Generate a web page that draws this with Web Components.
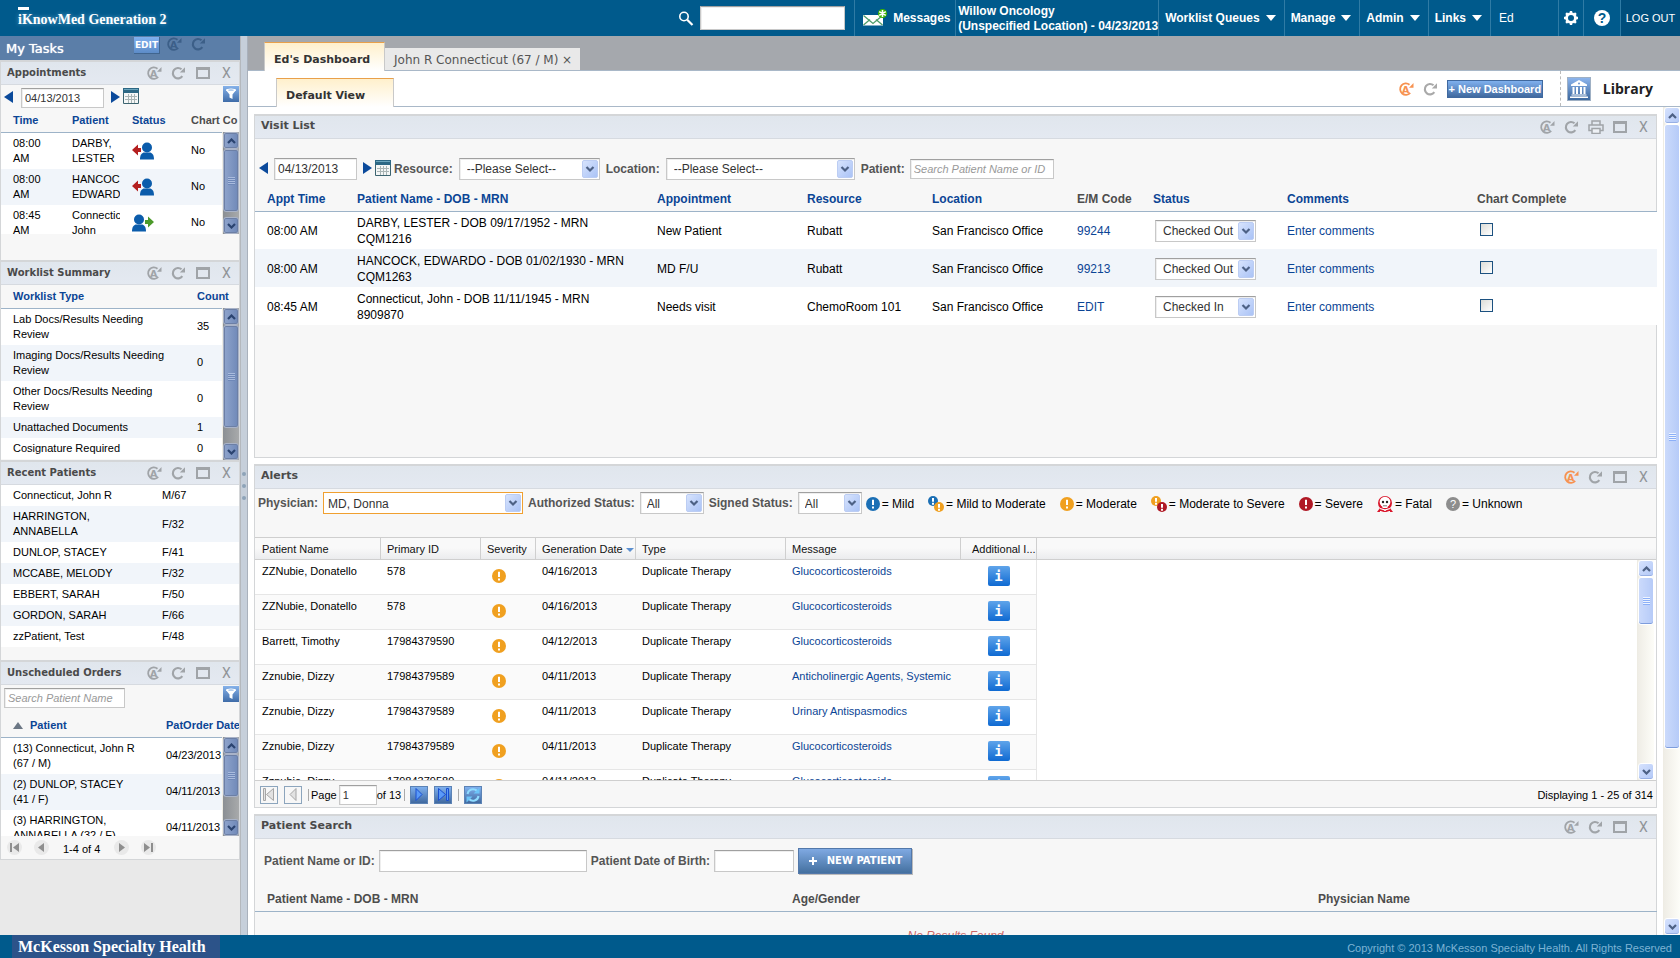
<!DOCTYPE html>
<html lang="en">
<head>
<meta charset="utf-8">
<title>iKnowMed Generation 2</title>
<style>
html, body { margin: 0; height: 100%; }
body { font: 12px/16px Arial, "Liberation Sans", sans-serif; color: #000; overflow: hidden; }
</style>
</head>
<body>
<km-app></km-app>
<script>
const VERDANA = 'Verdana, "DejaVu Sans", sans-serif';
const ARROW = "url(\"data:image/svg+xml,%3Csvg xmlns='http://www.w3.org/2000/svg' width='16' height='18'%3E%3ClinearGradient id='g' x2='1' y2='1'%3E%3Cstop stop-color='%23d8e4fd'/%3E%3Cstop offset='1' stop-color='%23a9c2f6'/%3E%3C/linearGradient%3E%3Crect x='.5' y='.5' width='15' height='17' rx='1.5' fill='url(%23g)' stroke='%23bccdf3'/%3E%3Cpath d='M4.5 7l3.5 3.5L11.500 7' fill='none' stroke='%234d6185' stroke-width='2.2'/%3E%3C/svg%3E\")";

const BASE = `
*, *::before, *::after { box-sizing: border-box; }
button { font: inherit; color: inherit; border: 0; padding: 0; margin: 0; background: none; cursor: pointer; }
a { color: #0b4595; text-decoration: none; }
label { font-weight: bold; color: #555; white-space: nowrap; }
input:not([type]), select { font: inherit; font-size: 12px; color: #333; height: 22px; margin: 0; background: #fff; border: 1px solid #c8c8c8; border-top-color: #a0a0a0; box-shadow: inset 1px 1px 0 #eee; border-radius: 0; outline: 0; }
input:not([type]) { padding: 0 3px; }
input::placeholder { color: #999; font-style: italic; opacity: 1; }
select { appearance: none; padding: 0 18px 0 7px; background: #fff ${ARROW} no-repeat right 1px center; }
table { border-collapse: collapse; table-layout: fixed; width: 100%; }
th { text-align: left; color: #4d4d4d; }
th, td { padding: 0 0 0 12px; overflow: hidden; }
th.sort { color: #0b4595; }
svg { display: block; }
`;

const ICONS = {
  refresh: [15, 14, '<path d="M11.300 10.200A5.200 5.200 0 1 1 10.500 3.300" fill="none" stroke="currentColor" stroke-width="2.200"/><path d="M14 1.200v5.300H8.800z" fill="currentColor"/>'],
  auto: [15, 14, '<path d="M11.200 10.800A5.700 5.700 0 1 1 10.500 2.700" fill="none" stroke="currentColor" stroke-width="1.800"/><path d="M14.500 1v4.800H10z" fill="currentColor"/><text x="6.800" y="10.800" text-anchor="middle" font-family="DejaVu Sans, sans-serif" font-size="9.500" font-weight="bold" fill="currentColor">A</text>'],
  max: [14, 12, '<path d="M1 1v10h12V1z" fill="none" stroke="currentColor" stroke-width="2"/><path d="M0 0h14v3H0z" fill="currentColor"/>'],
  print: [16, 14, '<path d="M4 5V1h8v4M4 10.500H1V5h14v5.500h-3" fill="none" stroke="currentColor" stroke-width="1.500"/><path d="M4 8.500h8v5H4z" fill="#eef1f5" stroke="currentColor" stroke-width="1.500"/>'],
  left: [9, 12, '<path d="M9 0v12L0 6z" fill="#0b4a9b"/>'],
  right: [9, 12, '<path d="M0 0v12l9-6z" fill="#0b4a9b"/>'],
  cal: [16, 16, '<path d="M.5.5h15v15H.5z" fill="#f4f6f6" stroke="#3c6470"/><path d="M0 0h16v5H0z" fill="#2c6784"/><path d="M1 1h14v1H1z" fill="#6ba5bd"/><path d="M2 8.500h12M2 11.500h12M5.500 6v9M8.500 6v9M11.500 6v9" stroke="#a9b4b4"/>'],
  filter: [16, 16, '<defs><linearGradient id="f" x2="0" y2="1"><stop stop-color="#86b2ea"/><stop offset="1" stop-color="#3f6ca8"/></linearGradient></defs><path d="M0 0h16v16H0z" fill="url(#f)"/><path d="M3 4h10L9.500 8.500V13l-3-1.500v-3z" fill="#fff"/><ellipse cx="8" cy="4" rx="5" ry="1.500" fill="#fff"/><ellipse cx="8" cy="4" rx="3" ry=".6" fill="#6f9fdb"/>'],
  search: [16, 15, '<circle cx="6" cy="5.500" r="4.200" fill="none" stroke="#fff" stroke-width="1.600"/><path d="M9.200 8.800L14.500 14" stroke="#fff" stroke-width="2.200"/>'],
  mail: [26, 18, '<path d="M1 6h20v10.500H1z" fill="#fff"/><path d="M1.500 6.500l9.500 8 9.500-8M1.500 16l6.500-5.500M20.500 16l-6.500-5.500" fill="none" stroke="#4d9c6a" stroke-width="1.300"/><circle cx="20.500" cy="4.500" r="4.500" fill="#3cb400"/><path d="M20.500 1v7M17.200 2.600l6.600 3.800M23.800 2.600l-6.600 3.800" stroke="#fff" stroke-width="1.600"/>'],
  caret: [10, 6, '<path d="M0 0h10L5 6z" fill="#fff"/>'],
  gear: [14, 14, '<circle cx="7" cy="7" r="4.400" fill="none" stroke="#fff" stroke-width="2.800"/><g stroke="#fff" stroke-width="2.400"><path d="M7 0v2.500M7 11.500V14M0 7h2.500M11.500 7H14M2.100 2.100l1.700 1.700M10.200 10.200l1.700 1.700M11.900 2.100l-1.700 1.700M3.800 10.200l-1.700 1.700"/></g>'],
  help: [16, 16, '<circle cx="8" cy="8" r="8" fill="#fff"/><text x="8" y="13" text-anchor="middle" font-family="Liberation Sans, Arial" font-size="14" font-weight="bold" fill="#005a8c">?</text>'],
  library: [24, 24, '<defs><linearGradient id="l" x2="0" y2="1"><stop stop-color="#8cb4ec"/><stop offset="1" stop-color="#3d699f"/></linearGradient></defs><path d="M0 0h24v24H0z" fill="#9fb0c4"/><path d="M1 1h22v22H1z" fill="url(#l)"/><path d="M12 3l8 4.500V9H4V7.500zM5.500 10h2v7h-2zM9 10h2v7H9zM13 10h2v7h-2zM16.500 10h2v7h-2zM4.500 17.500h15v1h-15zM3 19.500h18v1.500H3z" fill="#fff"/><circle cx="12" cy="6.500" r="1" fill="#6f97cf"/>'],
  out: [22, 18, '<path d="M0 8l6-5.500V6h3v4H6v3.500z" fill="#b41f1f"/><circle cx="15" cy="5.500" r="5" fill="#0b5cab"/><path d="M8 17.500c0-5 2-7 4.500-7h5c2.500 0 4.500 2 4.500 7z" fill="#0b5cab"/>'],
  in: [22, 18, '<path d="M22 8l-6-5.500V6h-3v4h3v3.500z" fill="#4c9a2a"/><circle cx="7" cy="5.500" r="5" fill="#0b5cab"/><path d="M0 17.500c0-5 2-7 4.500-7h5c2.500 0 4.500 2 4.500 7z" fill="#0b5cab"/>'],
  fatal: [16, 16, '<circle cx="8" cy="7" r="7" fill="#d9152a"/><path d="M0 16l3-4 5 2 5-2 3 4z" fill="#d9152a"/><ellipse cx="8" cy="6" rx="5.400" ry="5.200" fill="#fff"/><path d="M5.500 9h5v3h-5z" fill="#fff"/><circle cx="6" cy="6" r="1.200" fill="#222"/><circle cx="10" cy="6" r="1.200" fill="#222"/><path d="M6 9.800h4" stroke="#555" stroke-width=".8"/><path d="M3 12.500l10 3M13 12.500l-10 3" stroke="#fff" stroke-width="1.300"/>'],
  sync: [16, 16, '<path d="M2.500 7a5.500 5.500 0 0 1 9.500-3M13.500 9a5.500 5.500 0 0 1-9.500 3" fill="none" stroke="#8fdcff" stroke-width="2"/><path d="M14.500 .5v6H8.500zM1.500 15.500v-6h6z" fill="#6cc4f8"/>'],
  desc: [8, 4, '<path d="M0 0h8L4 4z" fill="#5b8fd0"/>'],
  asc: [10, 7, '<path d="M0 7h10L5 0z" fill="#6c7785"/>'],
  plus: [10, 10, '<path d="M5 1v8M1 5h8" stroke="#fff" stroke-width="2"/>'],
  first: [9, 9, '<path d="M0 0h2v9H0zM9 0v9L3 4.500z" fill="currentColor"/>'],
  prev: [9, 9, '<path d="M7 0v9L1 4.500z" fill="currentColor"/>'],
  next: [9, 9, '<path d="M2 0v9l6-4.500z" fill="currentColor"/>'],
  last: [9, 9, '<path d="M7 0h2v9H7zM0 0v9l6-4.500z" fill="currentColor"/>'],
  bigfirst: [12, 13, '<path d="M.5.5h2v12h-2zM10.500.5v12l-7-6z" fill="#e2e2e2" stroke="#a6a6a6"/>'],
  bigprev: [12, 13, '<path d="M9 .5v12L3 6.500z" fill="#e2e2e2" stroke="#a6a6a6"/>'],
  bignext: [12, 13, '<path d="M3 .5v12l6-6z" fill="#5a9af8" stroke="#1a4fd0"/>'],
  biglast: [12, 13, '<path d="M9.500.5h2v12h-2zM1.500.5v12l7-6z" fill="#5a9af8" stroke="#1a4fd0"/>'],
  up: [9, 6, '<path d="M1 5l3.500-3.500L8 5" fill="none" stroke="currentColor" stroke-width="2.200"/>'],
  down: [9, 6, '<path d="M1 1l3.500 3.500L8 1" fill="none" stroke="currentColor" stroke-width="2.200"/>']
};
const bang = (cx, cy, r, fill) => `<circle cx="${cx}" cy="${cy}" r="${r}" fill="${fill}"/><path d="M${cx - 1} ${cy - r * .62}h2v${r * .75}h-2zM${cx - 1} ${cy + r * .35}h2v2h-2z" fill="#fff"/>`;
ICONS.mild = [14, 14, bang(7, 7, 7, '#1b6fb5')];
ICONS.moderate = [14, 14, bang(7, 7, 7, '#f0a020')];
ICONS.severe = [14, 14, bang(7, 7, 7, '#b01824')];
ICONS.mildmod = [16, 16, bang(5, 5, 5, '#1b6fb5') + bang(11, 11, 5, '#f0a020')];
ICONS.modsev = [16, 16, bang(5, 5, 5, '#f0a020') + bang(11, 11, 5, '#b01824')];
ICONS.unknown = [14, 14, '<circle cx="7" cy="7" r="7" fill="#8d8d8d"/><text x="7" y="11" text-anchor="middle" font-family="Liberation Sans, Arial" font-size="11" fill="#fff">?</text>'];

function define(name, css, html) {
  customElements.define(name, class extends HTMLElement {
    connectedCallback() {
      if (this.shadowRoot) return;
      const root = this.attachShadow({ mode: 'open' });
      root.innerHTML = `<style>${BASE}${css}</style>${typeof html === 'function' ? html(this) : html}`;
    }
  });
}
const icon = n => `<km-icon name="${n}"></km-icon>`;

define('km-icon', ':host { display: inline-block; flex: none; vertical-align: middle; }', el => {
  const [w, h, body] = ICONS[el.getAttribute('name')];
  return `<svg width="${w}" height="${h}" viewBox="0 0 ${w} ${h}" aria-hidden="true">${body}</svg>`;
});

/* Scrollbar; --size and --rest share the track between the thumb and the space under it. */
define('km-scrollbar', `
:host { display: flex; flex-direction: column; width: 17px; flex: none; background: linear-gradient(90deg, #efede6, #fdfdf8); border-left: 1px solid #eeece4; color: #4d6185; }
:host([dim]) { background: linear-gradient(90deg, #8b8f94, #a8aaab); color: #2b4470; }
button { height: 17px; flex: none; display: grid; place-items: center; border: 1px solid #fff; border-radius: 3px; background: linear-gradient(135deg, #d6e2fd, #b2c8f7); box-shadow: inset 0 -1px 0 #98b0e4; }
:host([dim]) button, :host([dim]) .thumb { background: linear-gradient(90deg, #8fa4cc, #7089b8); border-color: #a9b3c8; box-shadow: inset 0 0 0 1px #6c7fa5; }
.thumb { flex: var(--size) 1 0; border: 1px solid #fff; border-radius: 3px; background: linear-gradient(90deg, #cbdafb, #b6cbf8); box-shadow: inset 0 -1px 0 #7e9ddc; display: grid; place-items: center; }
.thumb i { width: 7px; height: 8px; background: repeating-linear-gradient(#eef4fe 0 1px, #8cb0f8 1px 2px); }
:host([dim]) .thumb i { background: repeating-linear-gradient(#a9bbdd 0 1px, #6f88b8 1px 2px); }
.rest { flex: var(--rest) 1 0; }`,
`<button aria-label="Scroll up">${icon('up')}</button><div class="thumb"><i></i></div><div class="rest"></div><button aria-label="Scroll down">${icon('down')}</button>`);

define('km-panel', `
:host { display: flex; flex-direction: column; border: 1px solid #d4d6d8; border-top-width: 2px; background: #f7f7f7; }
header { flex: none; height: 23px; display: flex; align-items: center; justify-content: space-between; background: linear-gradient(#e0e6ed, #e4e9f1); border-bottom: 1px solid #d6dae0; padding: 0 5px 0 6px; }
h2 { margin: 0; padding-bottom: 3px; font: bold 11px/16px ${VERDANA}; color: #4a4a4a; }
:host([compact]) h2 { font-size: 10px; padding-bottom: 0; }
:host([compact]) { border-bottom: 0; }
.tools { display: flex; align-items: center; gap: 9px; color: #a0a4a8; }
.tools button { display: grid; place-items: center; width: 15px; }
.tools .hot { color: #f79250; }
.tools .close { font: 14px/16px Roboto, sans-serif; color: #909498; }
.body { flex: 1; min-height: 0; display: flex; flex-direction: column; }`,
el => `<header><h2>${el.getAttribute('heading')}</h2><div class="tools">
<button class="${el.hasAttribute('hot') ? 'hot' : ''}" aria-label="Auto refresh">${icon('auto')}</button>
<button aria-label="Refresh">${icon('refresh')}</button>
${el.hasAttribute('print') ? `<button aria-label="Print">${icon('print')}</button>` : ''}
<button aria-label="Maximize">${icon('max')}</button><button class="close" aria-label="Close">X</button></div></header>
<div class="body"><slot></slot></div>`);

define('km-header', `
:host { display: flex; align-items: stretch; height: 36px; flex: none; background: #005a8c; color: #fff; font-weight: bold; }
.brand { margin-left: 18px; padding-top: 7px; flex: 1; }
.brand i { display: block; width: 11px; height: 3px; background: #fff; }
.brand span { font: bold 14px/20px "Liberation Serif", serif; text-shadow: 0 0 4px #5fa4cc; }
.find { display: flex; align-items: center; gap: 6px; padding-right: 9px; }
.find input { width: 145px; height: 24px; }
nav { display: flex; }
nav > * { display: flex; align-items: center; border-left: 1px solid #2f7ba5; white-space: nowrap; }
.menu { padding: 0 8px 0 6px; gap: 6px; }
.mail { padding: 0 4px 0 7px; gap: 5px; width: 101px; }
.place { padding: 2px 3px 0 2px; line-height: 15px; width: 203px; }
.user { width: 68px; padding-left: 8px; font-weight: normal; }
.ic { width: 25px; justify-content: center; }
.help { width: 37px; }
.out { width: 60px; justify-content: center; background: #004e7c; font-weight: normal; font-size: 11px; }`,
`<div class="brand"><i></i><span>iKnowMed Generation 2</span></div>
<div class="find">${icon('search')}<input aria-label="Search"></div>
<nav><button class="mail">${icon('mail')}Messages</button>
<div class="place">Willow Oncology<br>(Unspecified Location) - 04/23/2013</div>
${['Worklist Queues', 'Manage', 'Admin', 'Links'].map(t => `<button class="menu">${t}${icon('caret')}</button>`).join('')}
<div class="user">Ed</div><button class="ic" aria-label="Settings">${icon('gear')}</button><button class="ic help" aria-label="Help">${icon('help')}</button><button class="out">LOG OUT</button></nav>`);

define('km-footer', `
:host { display: flex; align-items: stretch; justify-content: space-between; height: 23px; flex: none; background: #005a8c; }
.logo { margin-left: 12px; width: 208px; padding-left: 6px; background: #2c5389; color: #fff; font: bold 16px/24px "Liberation Serif", serif; white-space: nowrap; }
small { font-size: 11px; line-height: 26px; color: #7db3d4; margin-right: 8px; }`,
`<div class="logo">McKesson Specialty Health</div><small>Copyright © 2013 McKesson Specialty Health. All Rights Reserved</small>`);

const LIST_CSS = `
:host { display: flex; flex-direction: column; flex: 1; min-height: 0; font-size: 11px; line-height: 15px; }
.bar { display: flex; align-items: flex-start; flex: none; }
.bar input { font-size: 11px; height: 20px; }
.bar button { display: grid; }
.list { position: relative; overflow: hidden; flex: 1; min-height: 0; }
th { height: 23px; border-bottom: 1px solid #9db3c8; white-space: nowrap; font-size: 11px; }
td { padding-top: 3px; padding-bottom: 3px; vertical-align: middle; }
tbody tr { background: #fff; } tbody tr:nth-child(even) { background: #f1f5fa; }
km-scrollbar { position: absolute; right: 0; top: 23px; bottom: 0; }
`;
define('km-appointments', LIST_CSS + `
.bar { padding: 3px 0 0 3px; height: 24px; }
.bar button { margin-top: 3px; } .bar input { width: 83px; margin: 0 7px 0 8px; }
.bar .cal { margin: 0 auto 0 3px; } .bar .filter { margin: -2px 0 0; }
.list { margin-bottom: 26px; }`,
`<div class="bar"><button aria-label="Previous day">${icon('left')}</button><input value="04/13/2013" aria-label="Date"><button aria-label="Next day">${icon('right')}</button><button class="cal" aria-label="Calendar">${icon('cal')}</button><button class="filter" aria-label="Filter">${icon('filter')}</button></div>
<div class="list"><table><colgroup><col style="width:59px"><col style="width:60px"><col style="width:59px"><col></colgroup>
<thead><tr><th class="sort">Time</th><th class="sort">Patient</th><th class="sort">Status</th><th>Chart Co</th></tr></thead><tbody>
${[['08:00 AM', 'DARBY, LESTER', 'out'], ['08:00 AM', 'HANCOCK, EDWARDO', 'out'], ['08:45 AM', 'Connecticut, John', 'in']].map(r => `<tr><td>${r[0].replace(' ', '<br>')}</td><td>${r[1]}</td><td>${icon(r[2])}</td><td>No</td></tr>`).join('')}
</tbody></table><km-scrollbar dim style="--size:62;--rest:5"></km-scrollbar></div>`);

define('km-worklist', LIST_CSS,
`<div class="list"><table><colgroup><col style="width:184px"><col></colgroup><thead><tr><th class="sort">Worklist Type</th><th class="sort">Count</th></tr></thead><tbody>
${[['Lab Docs/Results Needing Review', 35], ['Imaging Docs/Results Needing Review', 0], ['Other Docs/Results Needing Review', 0], ['Unattached Documents', 1], ['Cosignature Required', 0]].map(r => `<tr><td>${r[0].replace(' Review', '<br>Review')}</td><td>${r[1]}</td></tr>`).join('')}
</tbody></table><km-scrollbar dim style="--size:102;--rest:15"></km-scrollbar></div>`);

define('km-recent', LIST_CSS,
`<div class="list"><table><colgroup><col style="width:149px"><col></colgroup><tbody>
${[['Connecticut, John R', 'M/67'], ['HARRINGTON,<br>ANNABELLA', 'F/32'], ['DUNLOP, STACEY', 'F/41'], ['MCCABE, MELODY', 'F/32'], ['EBBERT, SARAH', 'F/50'], ['GORDON, SARAH', 'F/66'], ['zzPatient, Test', 'F/48']].map(r => `<tr><td>${r[0]}</td><td>${r[1]}</td></tr>`).join('')}
</tbody></table></div>`);

define('km-orders', LIST_CSS + `
.bar { padding: 3px 0 0 3px; height: 29px; justify-content: space-between; } .bar input { width: 121px; } .bar button { margin-top: -2px; }
th km-icon { margin-right: 7px; }
.pager { height: 24px; flex: none; display: flex; align-items: center; gap: 12px; padding-left: 6px; color: #8e8e8e; border-bottom: 1px solid #d4d6d8; }
.pager button { width: 15px; height: 15px; border-radius: 50%; background: #e9e9e9; display: grid; place-items: center; }
.pager span { color: #000; margin: 3px 2px 0; }`,
`<div class="bar"><input placeholder="Search Patient Name" aria-label="Search Patient Name"><button aria-label="Filter">${icon('filter')}</button></div>
<div class="list"><table><colgroup><col style="width:153px"><col></colgroup><thead><tr><th class="sort">${icon('asc')}Patient</th><th class="sort">PatOrder Date</th></tr></thead><tbody>
${[['(13) Connecticut, John R<br>(67 / M)', '04/23/2013'], ['(2) DUNLOP, STACEY<br>(41 / F)', '04/11/2013'], ['(3) HARRINGTON,<br>ANNABELLA (32 / F)', '04/11/2013']].map(r => `<tr><td>${r[0]}</td><td>${r[1]}</td></tr>`).join('')}
</tbody></table><km-scrollbar dim style="--size:42;--rest:22"></km-scrollbar></div>
<div class="pager"><button aria-label="First">${icon('first')}</button><button aria-label="Previous">${icon('prev')}</button><span>1-4 of 4</span><button aria-label="Next">${icon('next')}</button><button aria-label="Last">${icon('last')}</button></div>`);

define('km-sidebar', `
:host { display: block; width: 240px; flex: none; background: #e9e9e9; overflow: hidden; }
.top { height: 24px; background: #5b7ea8; color: #fff; display: flex; align-items: flex-start; padding-left: 6px; }
h1 { font: 13px/26px ${VERDANA}; margin: 0; width: 128px; text-shadow: 0 0 1px #fff; }
.top button { display: grid; place-items: center; margin: 1px 9px 0 0; color: #3c5f88; }
.top .edit { font: bold 9px/15px ${VERDANA}; width: 26px; height: 17px; margin: 1px 7px 0 0; color: #fff; background: linear-gradient(#7fb0ee, #5d8cc8); border-right: 1px solid #40658f; border-bottom: 1px solid #40658f; }
km-panel { height: 200px; }`,
`<div class="top"><h1>My Tasks</h1><button class="edit">EDIT</button><button aria-label="Auto refresh">${icon('auto')}</button><button aria-label="Refresh">${icon('refresh')}</button></div>
<km-panel compact heading="Appointments"><km-appointments></km-appointments></km-panel>
<km-panel compact heading="Worklist Summary"><km-worklist></km-worklist></km-panel>
<km-panel compact heading="Recent Patients"><km-recent></km-recent></km-panel>
<km-panel compact heading="Unscheduled Orders"><km-orders></km-orders></km-panel>`);

define('km-splitter', `
:host { display: flex; flex-direction: column; align-items: center; justify-content: center; gap: 8px; width: 8px; flex: none; background: #c6cfda; border-left: 1px solid #b4b8bd; border-right: 1px solid #a9b1bc; }
i { width: 4px; height: 4px; border-radius: 50%; background: #8ea3b8; }`, '<i></i><i></i><i></i>');

define('km-tabs', `
:host { display: block; flex: none; font: 11px/16px ${VERDANA}; color: #333; }
.row { display: flex; border-bottom: 1px solid #a9b8c8; }
.main { height: 35px; background: #a5a8ad; align-items: flex-end; padding-left: 16px; }
.sub { height: 36px; background: #fff; padding-left: 28px; align-items: center; padding-right: 27px; }
.on { font-weight: bold; text-align: left; background: linear-gradient(#fff0cc, #fff); border: 1px solid #c9c9c9; border-top: 1px solid #e9a04a; border-bottom: 0; margin-bottom: -1px; height: 29px; }
.main .on { width: 121px; padding: 6px 0 0 9px; }
.sub .on { width: 118px; align-self: flex-end; padding: 6px 0 0 9px; margin-right: auto; }
.off { height: 22px; width: 195px; background: #e9e9e9; display: flex; align-items: center; justify-content: space-between; padding: 2px 8px 0 9px; color: #555; font-size: 12px; }
.tool { color: #a9a9a9; margin-right: 9px; } .hot { color: #f79250; }
.new { font: bold 11px/16px "Liberation Sans", sans-serif; color: #fff; height: 18px; width: 96px; margin-right: 17px; background: linear-gradient(#7fb0ee, #40699f); border: 1px solid #40699f; white-space: nowrap; }
.lib { align-self: stretch; border-left: 1px dashed #bbb; padding-left: 6px; display: flex; align-items: center; gap: 12px; font: bold 14px/18px "Open Sans", sans-serif; color: #222; }`,
`<div class="row main" role="tablist"><button class="on" role="tab">Ed's Dashboard</button><button class="off" role="tab"><span>John R Connecticut (67 / M)</span><span>×</span></button></div>
<div class="row sub"><button class="on">Default View</button><button class="tool hot" aria-label="Auto refresh">${icon('auto')}</button><button class="tool" aria-label="Refresh">${icon('refresh')}</button><button class="new">+ New Dashboard</button><a class="lib" href="#library">${icon('library')}Library</a></div>`);

define('km-visits', `
:host { display: block; }
.bar { display: flex; align-items: center; gap: 6px; padding: 19px 0 9px 4px; }
.bar > * { flex: none; }
.bar button { display: grid; padding-bottom: 2px; }
.bar input { width: 83px; } .bar #pt { width: 144px; height: 20px; margin-left: -1px; font-size: 11px; }
.bar .cal { margin: 0 -3px; }
#res { width: 141px; } #loc { width: 189px; }
th { height: 22px; padding-bottom: 2px; border-bottom: 1px solid #9db3c8; }
td { height: 38px; padding-top: 1px; }
tbody tr { background: #fff; } tbody tr:nth-child(even) { background: #f1f5fa; }
td select { width: 101px; margin-left: 2px; display: block; }
input[type=checkbox] { appearance: none; display: block; width: 13px; height: 13px; margin: 0 0 2px 3px; border: 1px solid #1c5180; background: linear-gradient(135deg, #dcdcd7, #fff); }`,
`<div class="bar"><button aria-label="Previous day">${icon('left')}</button><input value="04/13/2013" aria-label="Visit date"><button aria-label="Next day">${icon('right')}</button><button class="cal" aria-label="Calendar">${icon('cal')}</button>
<label for="res">Resource:</label><select id="res"><option>--Please Select--</option></select><label for="loc">Location:</label><select id="loc"><option>--Please Select--</option></select><label for="pt">Patient:</label><input id="pt" placeholder="Search Patient Name or ID"></div>
<table><colgroup>${[90, 300, 150, 125, 145, 76, 134, 190, 192].map(w => `<col style="width:${w}px">`).join('')}</colgroup>
<thead><tr>${['Appt Time', 'Patient Name - DOB - MRN', 'Appointment', 'Resource', 'Location', 'E/M Code', 'Status', 'Comments', 'Chart Complete'].map(t => `<th class="${/E\/M|Chart/.test(t) ? '' : 'sort'}">${t}</th>`).join('')}</tr></thead><tbody>
${[['08:00 AM', 'DARBY, LESTER - DOB 09/17/1952 - MRN<br>CQM1216', 'New Patient', 'Rubatt', '99244', 'Checked Out'],
   ['08:00 AM', 'HANCOCK, EDWARDO - DOB 01/02/1930 - MRN<br>CQM1263', 'MD F/U', 'Rubatt', '99213', 'Checked Out'],
   ['08:45 AM', 'Connecticut, John - DOB 11/11/1945 - MRN<br>8909870', 'Needs visit', 'ChemoRoom 101', 'EDIT', 'Checked In']].map(r =>
`<tr><td>${r[0]}</td><td>${r[1]}</td><td>${r[2]}</td><td>${r[3]}</td><td>San Francisco Office</td><td><a href="#code">${r[4]}</a></td><td><select aria-label="Status"><option>${r[5]}</option></select></td><td><a href="#comments">Enter comments</a></td><td><input type="checkbox" aria-label="Chart complete"></td></tr>`).join('')}
</tbody></table>`);

define('km-alerts', `
:host { display: flex; flex-direction: column; flex: 1; min-height: 0; }
.bar { display: flex; align-items: flex-start; gap: 5px; padding: 3px 3px 0; height: 48px; flex: none; line-height: 22px; }
.bar > * { flex: none; }
#phy { width: 200px; padding-left: 4px; border-color: #f0a030; box-shadow: none; } #auth, #sign { width: 64px; padding-left: 6px; }
.key { display: flex; white-space: nowrap; height: 24px; margin-left: -1px; }
.key span { display: flex; align-items: center; gap: 2px; margin-right: 14px; }
.grid { position: relative; flex: 1; min-height: 0; overflow: hidden; border-top: 1px solid #cfcfcf; font-size: 11px; line-height: 14px;
  background: linear-gradient(#cfcfcf, #cfcfcf) 0 21px / 100% 1px no-repeat, linear-gradient(#f9f9f9 0 45%, #eaebed) 0 0 / 100% 22px no-repeat, #fff; }
table { width: 782px; border-collapse: separate; border-spacing: 0; }
th { height: 22px; font-weight: normal; color: #111; border-right: 1px solid #cfcfcf; white-space: nowrap; vertical-align: middle; text-overflow: ellipsis; }
th, td { padding-left: 6px; } th:first-child, td:first-child { padding-left: 7px; } th:last-child { padding-left: 11px; }
td { height: 35px; vertical-align: top; padding-top: 4px; border-bottom: 1px solid #e6e6e6; }
td.sev { padding: 9px 0 0 11px; }
td:last-child { padding: 6px 0 0; text-align: center; border-right: 1px solid #e6e6e6; }
td.sev km-icon, .info { display: block; }
tbody tr:nth-child(even) { background: #fafafa; }
.info { width: 22px; height: 20px; margin: 0 auto; border-radius: 2px; color: #fff; font: bold 14px/20px "DejaVu Sans Mono", monospace; background: linear-gradient(#5fa4ea, #0f6ad2); }
km-scrollbar { position: absolute; top: 22px; right: 2px; bottom: 0; }
.pager { height: 27px; flex: none; display: flex; align-items: center; border-top: 1px solid #cfcfcf; font-size: 11px; padding: 1px 3px 0 5px; }
.pager button { width: 18px; height: 18px; border: 1px solid #8ca5bd; background: #f7f7f7; display: grid; place-items: center; margin-right: 6px; }
.pager .act { background: linear-gradient(#7fb0ee, #40699f); border-color: #5c83b5; }
.pager i { width: 1px; height: 12px; background: #aaa; margin-right: 2px; } .pager .gap { margin-right: 5px; }
.pager label { font-weight: normal; color: #000; }
.pager input { width: 38px; height: 20px; font-size: 11px; margin: 0 0 0 2px; }
.pager .count { margin-left: auto; } .pager .of { width: 27px; white-space: nowrap; }`,
`<div class="bar"><label for="phy">Physician:</label><select id="phy"><option>MD, Donna</option></select><label for="auth">Authorized Status:</label><select id="auth"><option>All</option></select><label for="sign">Signed Status:</label><select id="sign"><option>All</option></select>
<div class="key">${[['mild', 'Mild'], ['mildmod', 'Mild to Moderate'], ['moderate', 'Moderate'], ['modsev', 'Moderate to Severe'], ['severe', 'Severe'], ['fatal', 'Fatal'], ['unknown', 'Unknown']].map(k => `<span>${icon(k[0])}= ${k[1]}</span>`).join('')}</div></div>
<div class="grid"><table><colgroup>${[126, 100, 55, 100, 150, 175, 76].map(w => `<col style="width:${w}px">`).join('')}</colgroup>
<thead><tr>${['Patient Name', 'Primary ID', 'Severity', 'Generation Date ' + icon('desc'), 'Type', 'Message', 'Additional I...'].map(t => `<th>${t}</th>`).join('')}</tr></thead><tbody>
${[['ZZNubie, Donatello', '578', '16', 'Glucocorticosteroids'], ['ZZNubie, Donatello', '578', '16', 'Glucocorticosteroids'], ['Barrett, Timothy', '17984379590', '12', 'Glucocorticosteroids'], ['Zznubie, Dizzy', '17984379589', '11', 'Anticholinergic Agents, Systemic'], ['Zznubie, Dizzy', '17984379589', '11', 'Urinary Antispasmodics'], ['Zznubie, Dizzy', '17984379589', '11', 'Glucocorticosteroids'], ['Zznubie, Dizzy', '17984379589', '11', 'Glucocorticosteroids']].map(r =>
`<tr><td>${r[0]}</td><td>${r[1]}</td><td class="sev">${icon('moderate')}</td><td>04/${r[2]}/2013</td><td>Duplicate Therapy</td><td><a href="#alert">${r[3]}</a></td><td><button class="info">i</button></td></tr>`).join('')}
</tbody></table><km-scrollbar style="--size:47;--rest:140"></km-scrollbar></div>
<div class="pager"><button aria-label="First">${icon('bigfirst')}</button><button aria-label="Previous">${icon('bigprev')}</button><i></i><label for="pg">Page</label><input id="pg" value="1"><span class="of">of 13</span><i class="gap"></i><button class="act" aria-label="Next">${icon('bignext')}</button><button class="act" aria-label="Last">${icon('biglast')}</button><i class="gap"></i><button class="act" aria-label="Reload">${icon('sync')}</button><span class="count">Displaying 1 - 25 of 314</span></div>`);

define('km-patient-search', `
:host { display: block; }
.bar { display: flex; align-items: center; gap: 4px; padding: 9px 0 14px 9px; }
#name { width: 208px; } #dob { width: 80px; }
button { display: flex; align-items: center; justify-content: center; gap: 9px; width: 114px; height: 26px; color: #fff; font: bold 10px/16px ${VERDANA}; background: linear-gradient(#7fa9e2, #44709f); border: 1px solid #5378aa; box-shadow: 1px 1px 0 #bbb; white-space: nowrap; }
th { height: 23px; border-bottom: 1px solid #9db3c8; }
p { margin: 16px 0; text-align: center; color: #c66; font-style: italic; }`,
`<div class="bar"><label for="name">Patient Name or ID:</label><input id="name"><label for="dob">Patient Date of Birth:</label><input id="dob"><button>${icon('plus')}NEW PATIENT</button></div>
<table><colgroup><col style="width:525px"><col style="width:526px"><col style="width:351px"></colgroup><thead><tr><th>Patient Name - DOB - MRN</th><th>Age/Gender</th><th>Physician Name</th></tr></thead></table><p>No Results Found</p>`);

define('km-app', `
:host { display: flex; flex-direction: column; height: 100vh; }
.mid { flex: 1; min-height: 0; display: flex; }
main { flex: 1; min-width: 0; display: flex; flex-direction: column; background: #fff; }
.view { flex: 1; min-height: 0; display: flex; }
.stack { flex: 1; min-width: 0; overflow: hidden; padding: 7px 6px 0; display: flex; flex-direction: column; gap: 6px; }
.stack km-panel { flex: none; min-height: 344px; }
.alerts { height: 344px; }`,
`<km-header></km-header><div class="mid"><km-sidebar></km-sidebar><km-splitter></km-splitter><main><km-tabs></km-tabs>
<div class="view"><div class="stack"><km-panel heading="Visit List" print><km-visits></km-visits></km-panel>
<km-panel class="alerts" heading="Alerts" hot><km-alerts></km-alerts></km-panel>
<km-panel heading="Patient Search"><km-patient-search></km-patient-search></km-panel></div><km-scrollbar style="--size:623;--rest:169"></km-scrollbar></div></main></div><km-footer></km-footer>`);
</script>
</body>
</html>
